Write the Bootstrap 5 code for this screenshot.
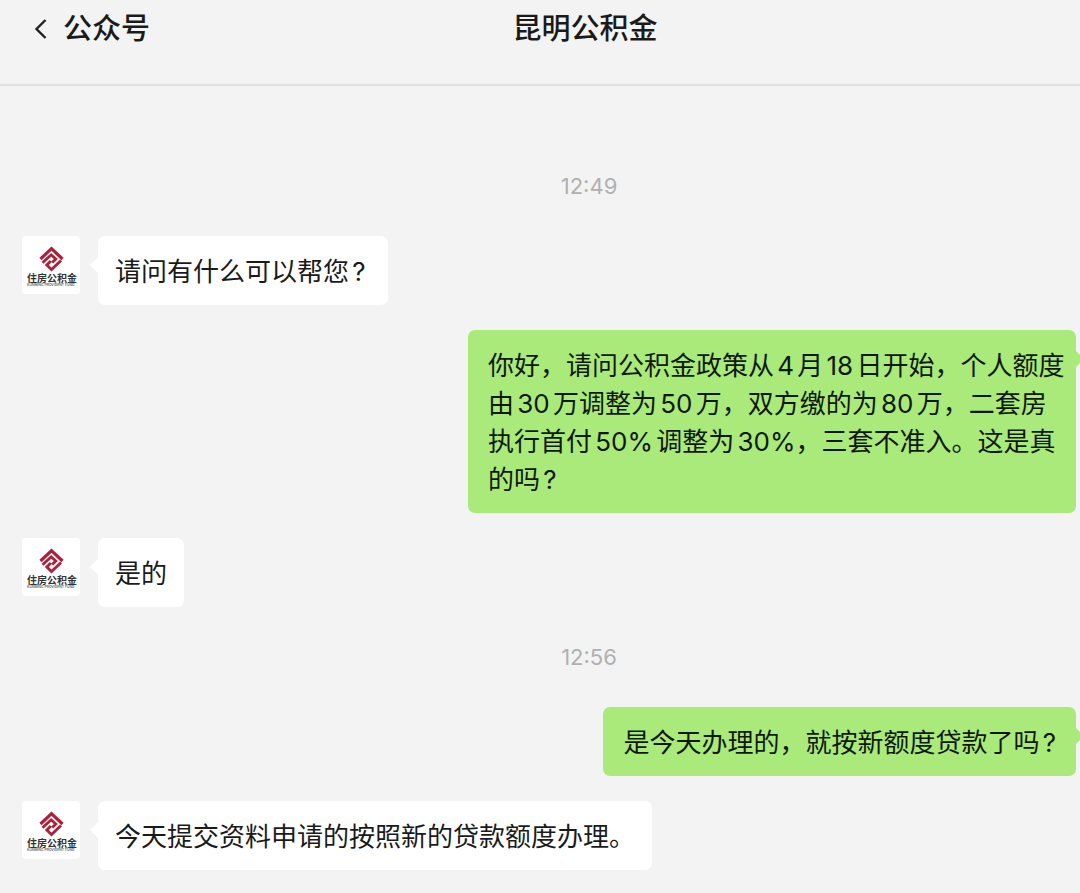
<!DOCTYPE html>
<html lang="zh-CN">
<head>
<meta charset="utf-8">
<meta name="viewport" content="width=device-width, initial-scale=1">
<title>昆明公积金</title>
<link href="https://cdn.jsdelivr.net/npm/bootstrap@5.3.0/dist/css/bootstrap.min.css" rel="stylesheet">
<style>
  body { background: #f3f3f3; color: #1a1a1a; font-family: Inter, "Noto Sans CJK SC", sans-serif; font-size: 26px; line-height: 38px; text-autospace: normal; }
  .topbar { display: grid; grid-template-columns: 1fr auto 1fr; padding: 9px 0 35px 32px; border-bottom: 2px solid #e0e0e0; font-size: 29px; line-height: 40px; font-weight: 500; }
  .topbar h1 { font-size: inherit; line-height: inherit; font-weight: inherit; padding-left: 58px; }
  .back-link { color: inherit; gap: 14px; }
  .chat { padding: 50px 4px 23px 22px; }
  .stamp { font-size: 22px; line-height: 24px; color: #b0b0b0; padding: 38px 0 38px 80px; }
  .msg { gap: 18px; }
  .msg + .msg { margin-top: 25px; }
  .avatar { width: 58px; height: 58px; border-radius: 4px; background: #fff; }
  .bubble { position: relative; background: #fff; border-radius: 7px; padding: 17px 17px 14px; }
  .bubble::before { content: ""; position: absolute; top: 21px; left: -8px; border: solid transparent; border-width: 8px 8px 8px 0; border-right-color: #fff; }
  .bubble-ask { padding-right: 22px; }
  .bubble-mine { background: #a9ea7a; color: #10180c; padding-left: 20px; padding-right: 20px; max-width: 608px; }
  .bubble-long { padding-right: 10px; }
  .bubble-mine::before { left: auto; right: -8px; border-width: 8px 0 8px 8px; border-left-color: #a9ea7a; }
</style>
</head>
<body class="overflow-x-hidden">
<svg class="d-none" aria-hidden="true">
  <symbol id="fund-logo" viewBox="0 0 58 58">
    <g fill="none" stroke="#b01f38">
      <path stroke-width="3.2" d="M18.500 23 29.500 12.600 40.500 23"/>
      <path stroke-width="2.800" d="M20.500 26.800 29.200 18.800 33.800 23 30.200 26.600M39 24.500 29.500 33.500 24.800 29 28.800 25"/>
    </g>
    <text x="5" y="46" font-size="10" font-weight="700" fill="#333">住房公积金</text>
    <text x="5" y="50" font-size="3.400" font-weight="600" fill="#666">KUNMING PROVIDENT FUND</text>
  </symbol>
</svg>
<header class="topbar">
  <a href="#" class="back-link d-flex align-items-center text-decoration-none">
    <svg width="17" height="24" viewBox="0 0 17 24" fill="none" stroke="#222" stroke-width="2.400" aria-hidden="true"><path d="M13.500 3 4.500 12 13.500 21"/></svg>公众号</a>
  <h1 class="mb-0">昆明公积金</h1>
</header>
<main class="chat">
  <time class="stamp d-block text-center">12:49</time>
  <div class="msg d-flex align-items-start">
    <svg class="avatar flex-shrink-0"><use href="#fund-logo"/></svg>
    <div class="bubble bubble-ask">请问有什么可以帮您?</div>
  </div>
  <div class="msg d-flex justify-content-end">
    <div class="bubble bubble-mine bubble-long">你好，请问公积金政策从4月18日开始，个人额度由30万调整为50万，双方缴的为80万，二套房执行首付50%调整为30%，三套不准入。这是真的吗?</div>
  </div>
  <div class="msg d-flex align-items-start">
    <svg class="avatar flex-shrink-0"><use href="#fund-logo"/></svg>
    <div class="bubble">是的</div>
  </div>
  <time class="stamp d-block text-center">12:56</time>
  <div class="msg d-flex justify-content-end">
    <div class="bubble bubble-mine">是今天办理的，就按新额度贷款了吗?</div>
  </div>
  <div class="msg d-flex align-items-start">
    <svg class="avatar flex-shrink-0"><use href="#fund-logo"/></svg>
    <div class="bubble">今天提交资料申请的按照新的贷款额度办理。</div>
  </div>
</main>
<script src="https://cdn.jsdelivr.net/npm/bootstrap@5.3.0/dist/js/bootstrap.bundle.min.js"></script>
</body>
</html>
